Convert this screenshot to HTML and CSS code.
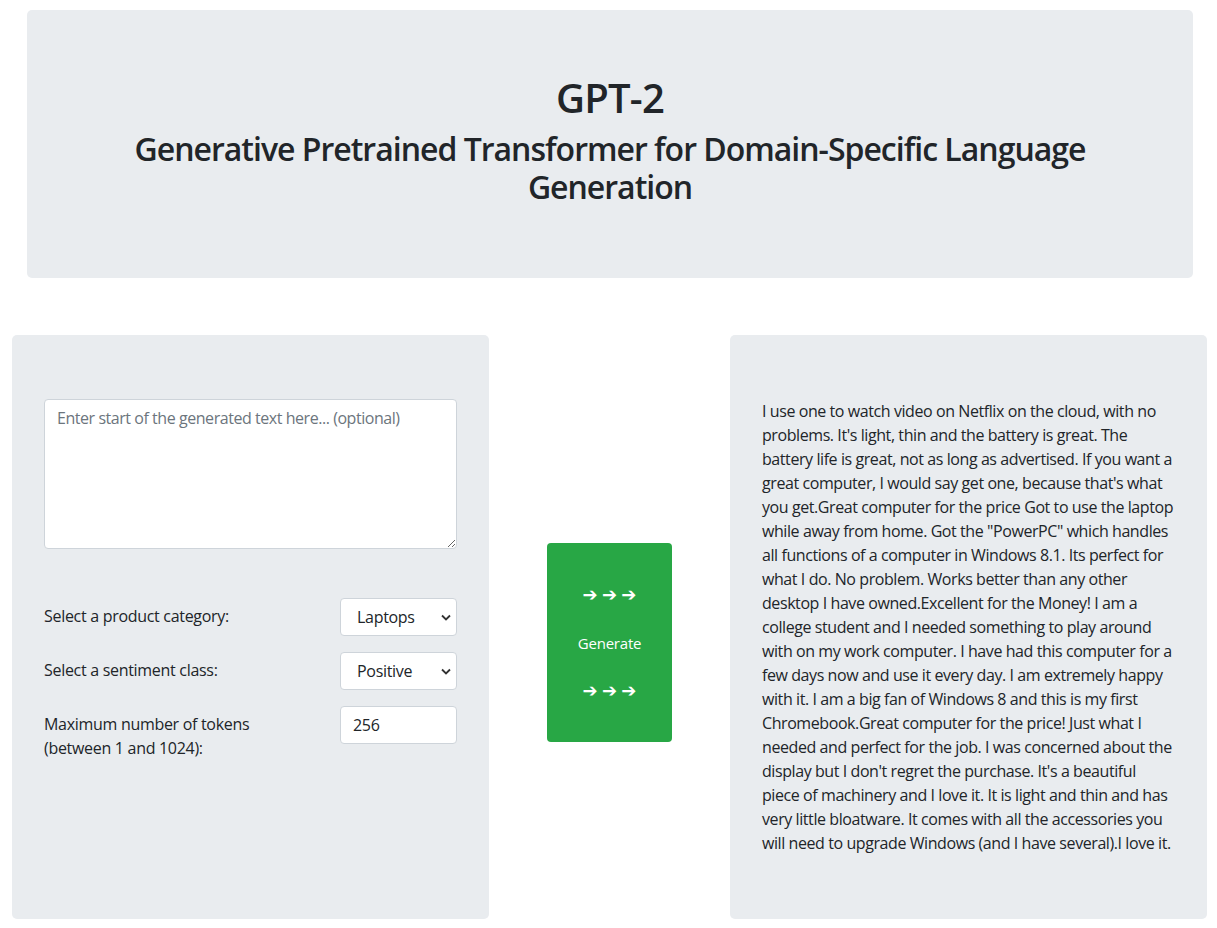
FILE: index.html
```html
<!DOCTYPE html>
<html lang="en">
<head>
<meta charset="utf-8">
<title>GPT-2</title>
<link rel="stylesheet" href="styles.css">
</head>
<body>
<header class="hero">
  <h1 class="hero-title">GPT-2</h1>
  <h2 class="hero-sub">Generative Pretrained Transformer for Domain-Specific Language Generation</h2>
</header>
<main class="workspace">
  <section class="panel form-panel">
    <textarea class="prompt" placeholder="Enter start of the generated text here... (optional)"></textarea>
    <div class="field">
      <label class="field-label" for="cat">Select a product category:</label>
      <select class="control select" id="cat"><option>Laptops</option><option>Phones</option></select>
    </div>
    <div class="field">
      <label class="field-label" for="sent">Select a sentiment class:</label>
      <select class="control select" id="sent"><option>Positive</option><option>Negative</option></select>
    </div>
    <div class="field">
      <label class="field-label" for="tok">Maximum number of tokens (between 1 and 1024):</label>
      <input class="control input" id="tok" type="text" value="256">
    </div>
  </section>
  <div class="middle">
    <button class="gen-btn" type="button">
      <span class="arrows">➔ ➔ ➔</span>
      <span class="gen-label">Generate</span>
      <span class="arrows">➔ ➔ ➔</span>
    </button>
  </div>
  <section class="panel output-panel">
    <p class="output-text">I use one to watch video on Netflix on the cloud, with no problems. It's light, thin and the battery is great. The battery life is great, not as long as advertised. If you want a great computer, I would say get one, because that's what you get.Great computer for the price Got to use the laptop while away from home. Got the "PowerPC" which handles all functions of a computer in Windows 8.1. Its perfect for what I do. No problem. Works better than any other desktop I have owned.Excellent for the Money! I am a college student and I needed something to play around with on my work computer. I have had this computer for a few days now and use it every day. I am extremely happy with it. I am a big fan of Windows 8 and this is my first Chromebook.Great computer for the price! Just what I needed and perfect for the job. I was concerned about the display but I don't regret the purchase. It's a beautiful piece of machinery and I love it. It is light and thin and has very little bloatware. It comes with all the accessories you will need to upgrade Windows (and I have several).I love it.</p>
  </section>
</main>
</body>
</html>
```
FILE: styles.css
```css
* { box-sizing: border-box; }
body {
  margin: 0;
  font-family: "Open Sans", "Noto Sans", sans-serif;
  font-size: 16px;
  line-height: 24px;
  color: #212529;
  background: #fff;
}
.hero {
  margin: 10px 24px 0 27px;
  background: #e9ecef;
  border-radius: 5px;
  padding: 64px 32px;
  text-align: center;
}
.hero-title {
  margin: 0 0 8px;
  font-size: 40px;
  line-height: 48px;
  font-weight: 600;
  letter-spacing: -0.8px;
}
.hero-sub {
  margin: 0 0 8px;
  font-size: 32px;
  line-height: 38px;
  font-weight: 600;
  letter-spacing: -1px;
}
.workspace {
  display: flex;
  margin-top: 57px;
  padding: 0 10px 0 12px;
}
.panel {
  flex: 0 0 477px;
  background: #e9ecef;
  border-radius: 5px;
  padding: 64px 32px;
}
.prompt {
  display: block;
  width: 100%;
  height: 150px;
  margin: 0 0 49px;
  padding: 6px 12px;
  border: 1px solid #ced4da;
  border-radius: 4px;
  font: inherit;
  color: #212529;
  background: #fff;
  resize: vertical;
  letter-spacing: -0.45px;
}
.prompt::placeholder { color: #6c757d; }
.field {
  display: flex;
  justify-content: space-between;
  align-items: flex-start;
  margin-bottom: 16px;
}
.field-label {
  flex: 0 0 225px;
  padding-top: 6px;
  letter-spacing: -0.3px;
}
.control {
  width: 117px;
  height: 38px;
  border: 1px solid #ced4da;
  border-radius: 4px;
  background-color: #fff;
  font: inherit;
  color: #212529;
  letter-spacing: -0.3px;
}
.select {
  appearance: none;
  -webkit-appearance: none;
  padding: 0 28px 0 16px;
  background-image: url("data:image/svg+xml,%3csvg xmlns='http://www.w3.org/2000/svg' viewBox='0 0 10 7'%3e%3cpath fill='none' stroke='%23333' stroke-width='1.8' d='M1 1.5l4 4 4-4'/%3e%3c/svg%3e");
  background-repeat: no-repeat;
  background-position: right 5px center;
  background-size: 10px 7px;
}
.input { padding: 0 12px; }
.middle {
  flex: 1 1 auto;
  display: flex;
  justify-content: center;
  align-items: flex-start;
}
.gen-btn {
  margin-top: 208px;
  width: 125px;
  height: 199px;
  border: 0;
  border-radius: 4px;
  background: #28a745;
  color: #fff;
  font: inherit;
  font-size: 15px;
  display: flex;
  flex-direction: column;
  justify-content: center;
  align-items: center;
  gap: 24px;
  padding: 0;
}
.arrows {
  font-family: "DejaVu Sans", sans-serif;
  font-size: 18px;
  line-height: 24px;
  font-weight: bold;
  word-spacing: -2px;
}
.gen-label { line-height: 24px; letter-spacing: -0.2px; }
.output-text {
  margin: 0;
  letter-spacing: -0.42px;
}
```
